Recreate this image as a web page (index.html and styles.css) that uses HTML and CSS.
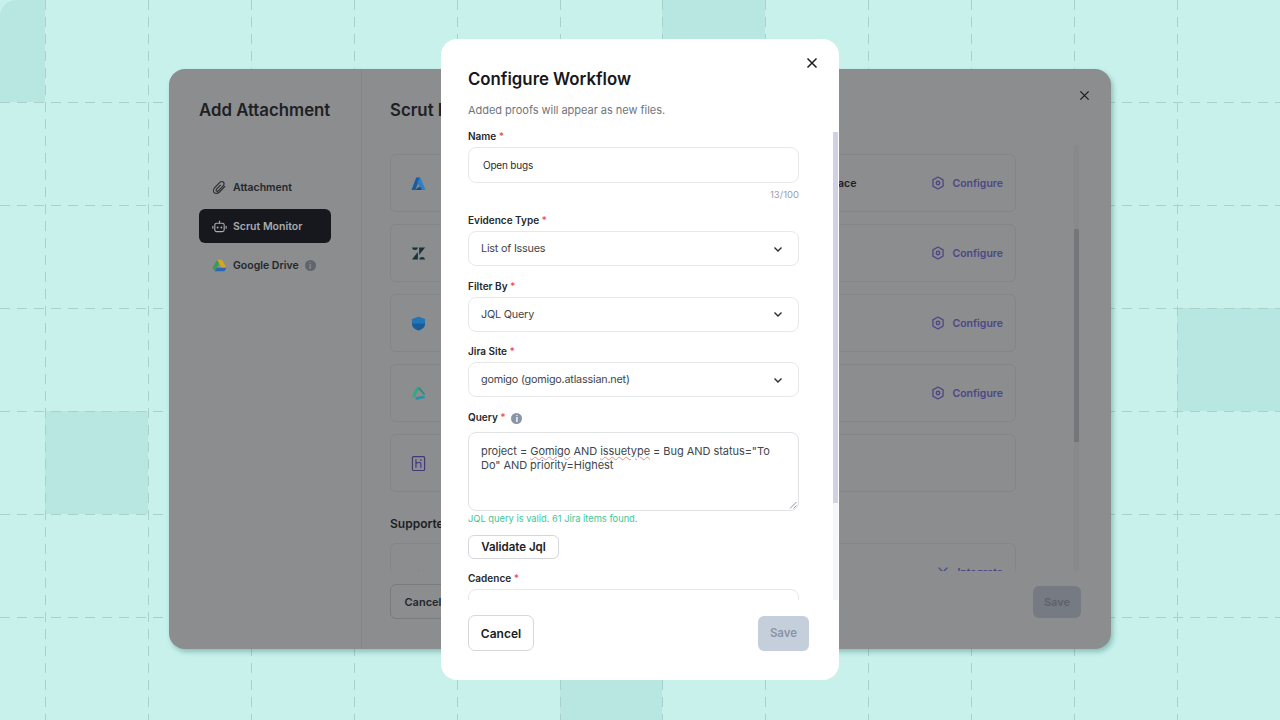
FILE: index.html
```html
<!DOCTYPE html>
<html lang="en">
<head>
<meta charset="UTF-8">
<meta name="viewport" content="width=device-width, initial-scale=1.0">
<link rel="stylesheet" href="styles.css">
<title>Configure Workflow</title>
</head>
<body>
  <!-- backdrop grid -->
  <svg class="backdrop" width="1280" height="720" viewBox="0 0 1280 720">
    <path class="tile" d="M0 16a16 16 0 0 1 16-16h29v102H0z"/>
    <rect class="tile" x="662" y="0" width="103" height="40"/>
    <rect class="tile" x="1177" y="308" width="103" height="103"/>
    <rect class="tile" x="45" y="411" width="103" height="103"/>
    <rect class="tile" x="560" y="680" width="102" height="40"/>
    <g class="grid-lines">
      <path d="M45.500 0V720M148.500 0V720M251.500 0V720M354.500 0V720M457.500 0V720M560.500 0V720M662.500 0V720M765.500 0V720M868.500 0V720M971.500 0V720M1074.500 0V720M1177.500 0V720"/>
      <path d="M0 102.500H1280M0 205.500H1280M0 308.500H1280M0 411.500H1280M0 514.500H1280M0 617.500H1280"/>
    </g>
  </svg>

  <!-- window behind, dimmed -->
  <div class="back-dialog">
    <aside class="sidebar">
      <h2 class="back-title">Add Attachment</h2>
      <nav class="side-nav">
        <a class="nav-item">
          <svg class="nav-icon" viewBox="0 0 16 16"><path d="M14 6.500 8 12.800c-1.800 1.800-4.300 2-5.600.7s-1.100-3.800.7-5.600l5-5c1.300-1.300 3.100-1.500 4.100-.5s.8 2.800-.5 4.100l-4.800 4.900c-.7.700-1.700.8-2.200.3s-.4-1.500.3-2.200l4.300-4.300"/></svg>
          Attachment
        </a>
        <a class="nav-item active">
          <svg class="nav-icon" viewBox="0 0 16 16"><rect x="3" y="4.500" width="10" height="9" rx="2"/><path d="M8 4.500V1.800M.9 7.500v3M15.100 7.500v3"/><circle cx="6" cy="9" r="1" class="dot"/><circle cx="10" cy="9" r="1" class="dot"/></svg>
          Scrut Monitor
        </a>
        <a class="nav-item">
          <svg class="nav-icon" viewBox="0 0 16 14"><path fill="#3a9a58" d="M5.500 .8 .6 9.500l2.400 3.700 5-8.700z"/><path fill="#d9a520" d="M5.500 .8h5l5 8.700h-5.200z"/><path fill="#2c66b8" d="M3 13.200h10.200l2.300-3.700H5.200z"/></svg>
          Google Drive
          <span class="info-dot dim">i</span>
        </a>
      </nav>
    </aside>

    <main class="back-main">
      <h2 class="back-title">Scrut Monitor</h2>
      <div class="card-scroll">
        <div class="int-card">
          <svg class="logo" viewBox="0 0 16 16"><path fill="#1b5c9e" d="M5.500 1.500h4.300L4.700 14.800H.5z"/><path fill="#2b7fc6" d="M9.800 1.500 15.500 14.800h-5.300L6.800 6z"/><path fill="#154a85" d="M4.700 14.800l3-2.800h2.600l.9 2.800z"/></svg>
          <span class="int-name">Azure DevOps Services Workspace</span>
          <a class="configure"><svg class="gear" viewBox="0 0 16 16"><path d="M8 1.200l5.800 3.300v7L8 14.800l-5.800-3.300v-7z"/><circle cx="8" cy="8" r="2"/></svg>Configure</a>
        </div>
        <div class="int-card">
          <svg class="logo" viewBox="0 0 16 16"><path fill="#17333a" d="M1 1.500h6.500a3.300 3.300 0 0 1-6.500 0zM7.300 6.300v8.200H1zM8.700 14.500a3.200 3.200 0 0 1 6.300 0zM8.700 9.700V1.500H15z"/></svg>
          <span class="int-name"></span>
          <a class="configure"><svg class="gear" viewBox="0 0 16 16"><path d="M8 1.200l5.800 3.300v7L8 14.800l-5.800-3.300v-7z"/><circle cx="8" cy="8" r="2"/></svg>Configure</a>
        </div>
        <div class="int-card">
          <svg class="logo" viewBox="0 0 16 16"><path fill="#2176b8" d="M8 .8l7 2.500v5C15 12 12 14.500 8 15.500 4 14.500 1 12 1 8.300v-5z"/><path fill="#123f74" d="M8 8h7c-.3 3.700-3.200 6.500-7 7.500C4.200 14.500 1.300 11.700 1 8z" opacity=".45"/></svg>
          <span class="int-name"></span>
          <a class="configure"><svg class="gear" viewBox="0 0 16 16"><path d="M8 1.200l5.800 3.300v7L8 14.800l-5.800-3.300v-7z"/><circle cx="8" cy="8" r="2"/></svg>Configure</a>
        </div>
        <div class="int-card">
          <svg class="logo tri" viewBox="0 0 16 16"><path stroke="#35a688" stroke-width="3.200" d="M6.800 3 3 10.500"/><path stroke="#2b8f78" stroke-width="2" d="M8.800 2.500 13.800 8.500"/><path stroke="#2c8fa6" stroke-width="2.800" d="M6 13.200 13.500 11.700"/></svg>
          <span class="int-name"></span>
          <a class="configure"><svg class="gear" viewBox="0 0 16 16"><path d="M8 1.200l5.800 3.300v7L8 14.800l-5.800-3.300v-7z"/><circle cx="8" cy="8" r="2"/></svg>Configure</a>
        </div>
        <div class="int-card">
          <svg class="logo heroku" viewBox="0 0 16 16"><rect x="1.500" y=".6" width="13" height="14.800" rx="1"/><path d="M5.300 3.500v9M5.300 8c2-1.300 5.200-1.800 5.200 .3v4.200M10.500 3.500v1.800"/></svg>
        </div>
        <h3 class="supported">Supported Integrations</h3>
        <div class="int-card">
          <svg class="logo" viewBox="0 0 16 16"><path fill="#2a2c30" d="M3 6l2.500 2L8 6l2.500 2L13 6v6H3z"/></svg>
          <span class="int-name"></span>
          <a class="configure"><svg class="gear" viewBox="0 0 16 16"><path d="M3 3l10 10M13 3 3 13"/></svg>Integrate</a>
        </div>
        <div class="back-bar"><div class="back-thumb"></div></div>
      </div>
      <div class="back-footer">
        <button class="back-btn">Cancel</button>
        <button class="back-btn save">Save</button>
      </div>
    </main>

    <svg class="back-close" viewBox="0 0 12 12"><path d="M1.500 1.500l9 9M10.500 1.500l-9 9"/></svg>
  </div>

  <!-- front modal -->
  <div class="modal">
    <svg class="modal-close" viewBox="0 0 12 12"><path d="M1.500 1.500l9 9M10.500 1.500l-9 9"/></svg>
    <header class="modal-head">
      <h1 class="modal-title">Configure Workflow</h1>
      <p class="modal-sub">Added proofs will appear as new files.</p>
    </header>

    <div class="modal-body">
      <label class="field-label">Name <span class="req">*</span></label>
      <div class="input name-input">Open bugs</div>
      <div class="counter">13/100</div>

      <label class="field-label">Evidence Type <span class="req">*</span></label>
      <div class="input select">List of Issues
        <svg class="chev" viewBox="0 0 12 12"><path d="M2.500 4.500 6 8l3.500-3.500"/></svg>
      </div>

      <label class="field-label">Filter By <span class="req">*</span></label>
      <div class="input select">JQL Query
        <svg class="chev" viewBox="0 0 12 12"><path d="M2.500 4.500 6 8l3.500-3.500"/></svg>
      </div>

      <label class="field-label">Jira Site <span class="req">*</span></label>
      <div class="input select">gomigo (gomigo.atlassian.net)
        <svg class="chev" viewBox="0 0 12 12"><path d="M2.500 4.500 6 8l3.500-3.500"/></svg>
      </div>

      <label class="field-label query-label">Query <span class="req">*</span> <span class="info-dot">i</span></label>
      <div class="textarea">project = <span class="typo">Gomigo</span> AND <span class="typo">issuetype</span> = Bug AND status="To Do" AND priority=Highest
        <svg class="grip" viewBox="0 0 8 8"><path d="M1 7.500 7.500 1M4.500 7.500l3-3"/></svg>
      </div>
      <p class="valid">JQL query is valid. 61 Jira items found.</p>
      <button class="validate">Validate Jql</button>

      <label class="field-label cadence">Cadence <span class="req">*</span></label>
      <div class="input select"></div>

      <div class="modal-bar"><div class="modal-thumb"></div></div>
    </div>

    <footer class="modal-foot">
      <button class="btn-cancel">Cancel</button>
      <button class="btn-save">Save</button>
    </footer>
  </div>
</body>
</html>
```

FILE: styles.css
```css
* {
  box-sizing: border-box;
  margin: 0;
  padding: 0;
}

body {
  width: 1280px;
  height: 720px;
  overflow: hidden;
  background-color: #c8f1ec;
  font-family: "Inter", "Liberation Sans", sans-serif;
  color: #1c1e22;
}

button {
  font-family: inherit;
  background: none;
}

/* backdrop */
.backdrop {
  position: absolute;
  left: 0;
  top: 0;
}

.tile {
  fill: #b8e7e1;
}

.grid-lines path {
  fill: none;
  stroke: #a9d0cb;
  stroke-width: 1;
  stroke-dasharray: 10 7;
}

/* dimmed window */
.back-dialog {
  position: absolute;
  left: 169px;
  top: 69px;
  width: 942px;
  height: 580px;
  display: flex;
  background-color: #8b8d8f;
  border-radius: 16px;
  box-shadow: 2px 3px 5px rgba(30, 100, 90, 0.35);
}

.sidebar {
  width: 193px;
  padding: 29px 30px 0;
  border-right: 1px solid #838587;
}

.back-title {
  font-size: 16.800px;
  line-height: 24px;
  font-weight: 600;
  color: #1e2024;
  white-space: nowrap;
}

.side-nav {
  margin-top: 48px;
  display: flex;
  flex-direction: column;
  gap: 5px;
}

.nav-item {
  display: flex;
  align-items: center;
  gap: 6px;
  height: 34px;
  padding: 1px 0 0 13px;
  border-radius: 6px;
  font-size: 10.500px;
  font-weight: 600;
  color: #25272b;
  white-space: nowrap;
}

.nav-item.active {
  background-color: #16181d;
  color: #a9abae;
}

.nav-icon {
  width: 15px;
  height: 15px;
  fill: none;
  stroke: #2a2c30;
  stroke-width: 1.200;
  flex-shrink: 0;
}

.active .nav-icon {
  stroke: #a9abae;
}

.nav-icon .dot {
  fill: #a9abae;
  stroke: none;
}

.nav-icon path[fill] {
  stroke: none;
}

.info-dot {
  display: inline-flex;
  align-items: center;
  justify-content: center;
  width: 11px;
  height: 11px;
  margin-left: 3px;
  border-radius: 50%;
  background-color: #8a94a6;
  color: #fff;
  font-size: 8px;
  font-weight: 700;
  vertical-align: -1px;
}

.info-dot.dim {
  margin-left: 0;
  background-color: #5f6570;
  color: #8b8d8f;
}

.back-main {
  flex: 1;
  padding: 29px 30px 0 28px;
}

.card-scroll {
  position: relative;
  height: 426px;
  margin-top: 23px;
  padding-top: 9px;
  overflow: hidden;
}

.int-card {
  display: flex;
  align-items: center;
  width: 626px;
  height: 58px;
  margin-bottom: 12px;
  padding: 0 12px 0 20px;
  border: 1px solid #838587;
  border-radius: 6px;
}

.logo {
  width: 15px;
  height: 15px;
  flex-shrink: 0;
}

.tri path {
  fill: none;
  stroke-linecap: round;
}

.heroku {
  height: 17px;
}

.heroku rect,
.heroku path {
  fill: none;
  stroke: #3d3a75;
  stroke-width: 1.200;
}

.int-name {
  flex: 1;
  padding-right: 75px;
  text-align: right;
  font-size: 10.500px;
  font-weight: 600;
  color: #1e2024;
}

.configure {
  display: flex;
  align-items: center;
  gap: 7px;
  font-size: 10.500px;
  font-weight: 600;
  color: #4c4886;
}

.gear {
  width: 14px;
  height: 14px;
  fill: none;
  stroke: #4c4886;
  stroke-width: 1.500;
  stroke-linejoin: round;
}

.supported {
  margin: 24px 0 11px;
  font-size: 12px;
  line-height: 16px;
  font-weight: 600;
  color: #1e2024;
}

.back-bar {
  position: absolute;
  right: 2px;
  top: 0;
  width: 5px;
  height: 100%;
  background-color: #87898b;
}

.back-thumb {
  position: absolute;
  top: 84px;
  width: 100%;
  height: 213px;
  background-color: #73767b;
}

.back-footer {
  display: flex;
  justify-content: space-between;
  align-items: center;
  margin-top: 13px;
}

.back-btn {
  height: 35px;
  width: 66px;
  border: 1px solid #797b7e;
  border-radius: 6px;
  font-size: 11px;
  font-weight: 600;
  color: #25272b;
}

.back-btn.save {
  width: 48px;
  height: 32px;
  border: none;
  background-color: #757a83;
  color: #5d626b;
}

.back-close {
  position: absolute;
  right: 21px;
  top: 21px;
  width: 11px;
  height: 11px;
  fill: none;
  stroke: #1a1c20;
  stroke-width: 1.400;
}

/* front modal */
.modal {
  position: absolute;
  left: 441px;
  top: 39px;
  width: 398px;
  height: 641px;
  display: flex;
  flex-direction: column;
  background-color: #fff;
  border-radius: 16px;
}

.modal-close {
  position: absolute;
  right: 21px;
  top: 18px;
  width: 12px;
  height: 12px;
  fill: none;
  stroke: #1a1c20;
  stroke-width: 1.500;
}

.modal-head {
  padding: 28px 27px 0;
}

.modal-title {
  font-size: 16.800px;
  line-height: 24px;
  font-weight: 600;
  color: #16181c;
}

.modal-sub {
  margin-top: 11px;
  font-size: 11px;
  line-height: 16px;
  letter-spacing: -0.030px;
  color: #70757d;
}

.modal-body {
  position: relative;
  flex: 1;
  min-height: 0;
  margin-top: 10px;
  padding: 0 40px 0 27px;
  overflow: hidden;
}

.field-label {
  display: block;
  margin-bottom: 3px;
  font-size: 10px;
  line-height: 16px;
  font-weight: 600;
  color: #26282c;
}

.req {
  color: #f0564f;
}

.input {
  display: flex;
  align-items: center;
  justify-content: space-between;
  height: 35px;
  margin-bottom: 11.600px;
  padding: 0 14px 0 12px;
  border: 1px solid #e6e8ec;
  border-radius: 8px;
  font-size: 10.800px;
  letter-spacing: -0.200px;
  color: #42454b;
}

.name-input {
  height: 36px;
  margin-bottom: 5px;
  padding-left: 14px;
  font-size: 10px;
  color: #2a2c30;
}

.counter {
  margin-bottom: 10px;
  text-align: right;
  font-size: 9.500px;
  line-height: 14px;
  color: #9aa0a8;
}

.chev {
  width: 12px;
  height: 12px;
  fill: none;
  stroke: #2a2c30;
  stroke-width: 1.400;
}

.query-label {
  margin-bottom: 7px;
}

.textarea {
  position: relative;
  height: 79px;
  padding: 11px 12px;
  border: 1px solid #e0e2e6;
  border-radius: 8px;
  font-size: 11px;
  line-height: 14px;
  letter-spacing: -0.050px;
  color: #42454b;
}

.typo {
  text-decoration: underline wavy #ee8a85 1px;
}

.grip {
  position: absolute;
  right: 1px;
  bottom: 1px;
  width: 8px;
  height: 8px;
  fill: none;
  stroke: #777;
  stroke-width: 0.800;
}

.valid {
  margin-top: 1px;
  font-size: 9.300px;
  line-height: 14px;
  color: #3cc796;
}

.validate {
  display: block;
  width: 91px;
  height: 24px;
  margin-top: 9px;
  border: 1px solid #d5d7db;
  border-radius: 6px;
  font-size: 11.500px;
  font-weight: 600;
  color: #1e2024;
}

.cadence {
  margin-top: 11px;
}

.modal-bar {
  position: absolute;
  right: 1px;
  top: 4px;
  width: 5px;
  bottom: 0;
  background-color: #f5f6f9;
}

.modal-thumb {
  width: 100%;
  height: 371px;
  background-color: #cfd2e4;
}

.modal-foot {
  display: flex;
  justify-content: space-between;
  align-items: center;
  height: 80px;
  padding: 15px 30px 29px 27px;
}

.btn-cancel {
  width: 66px;
  height: 36px;
  border: 1px solid #d5d7db;
  border-radius: 7px;
  font-size: 12px;
  font-weight: 600;
  color: #1a1c20;
}

.btn-save {
  width: 51px;
  height: 35px;
  border: none;
  border-radius: 6px;
  background-color: #c5cfdc;
  font-size: 11.500px;
  font-weight: 600;
  color: #8a94a6;
}
```
